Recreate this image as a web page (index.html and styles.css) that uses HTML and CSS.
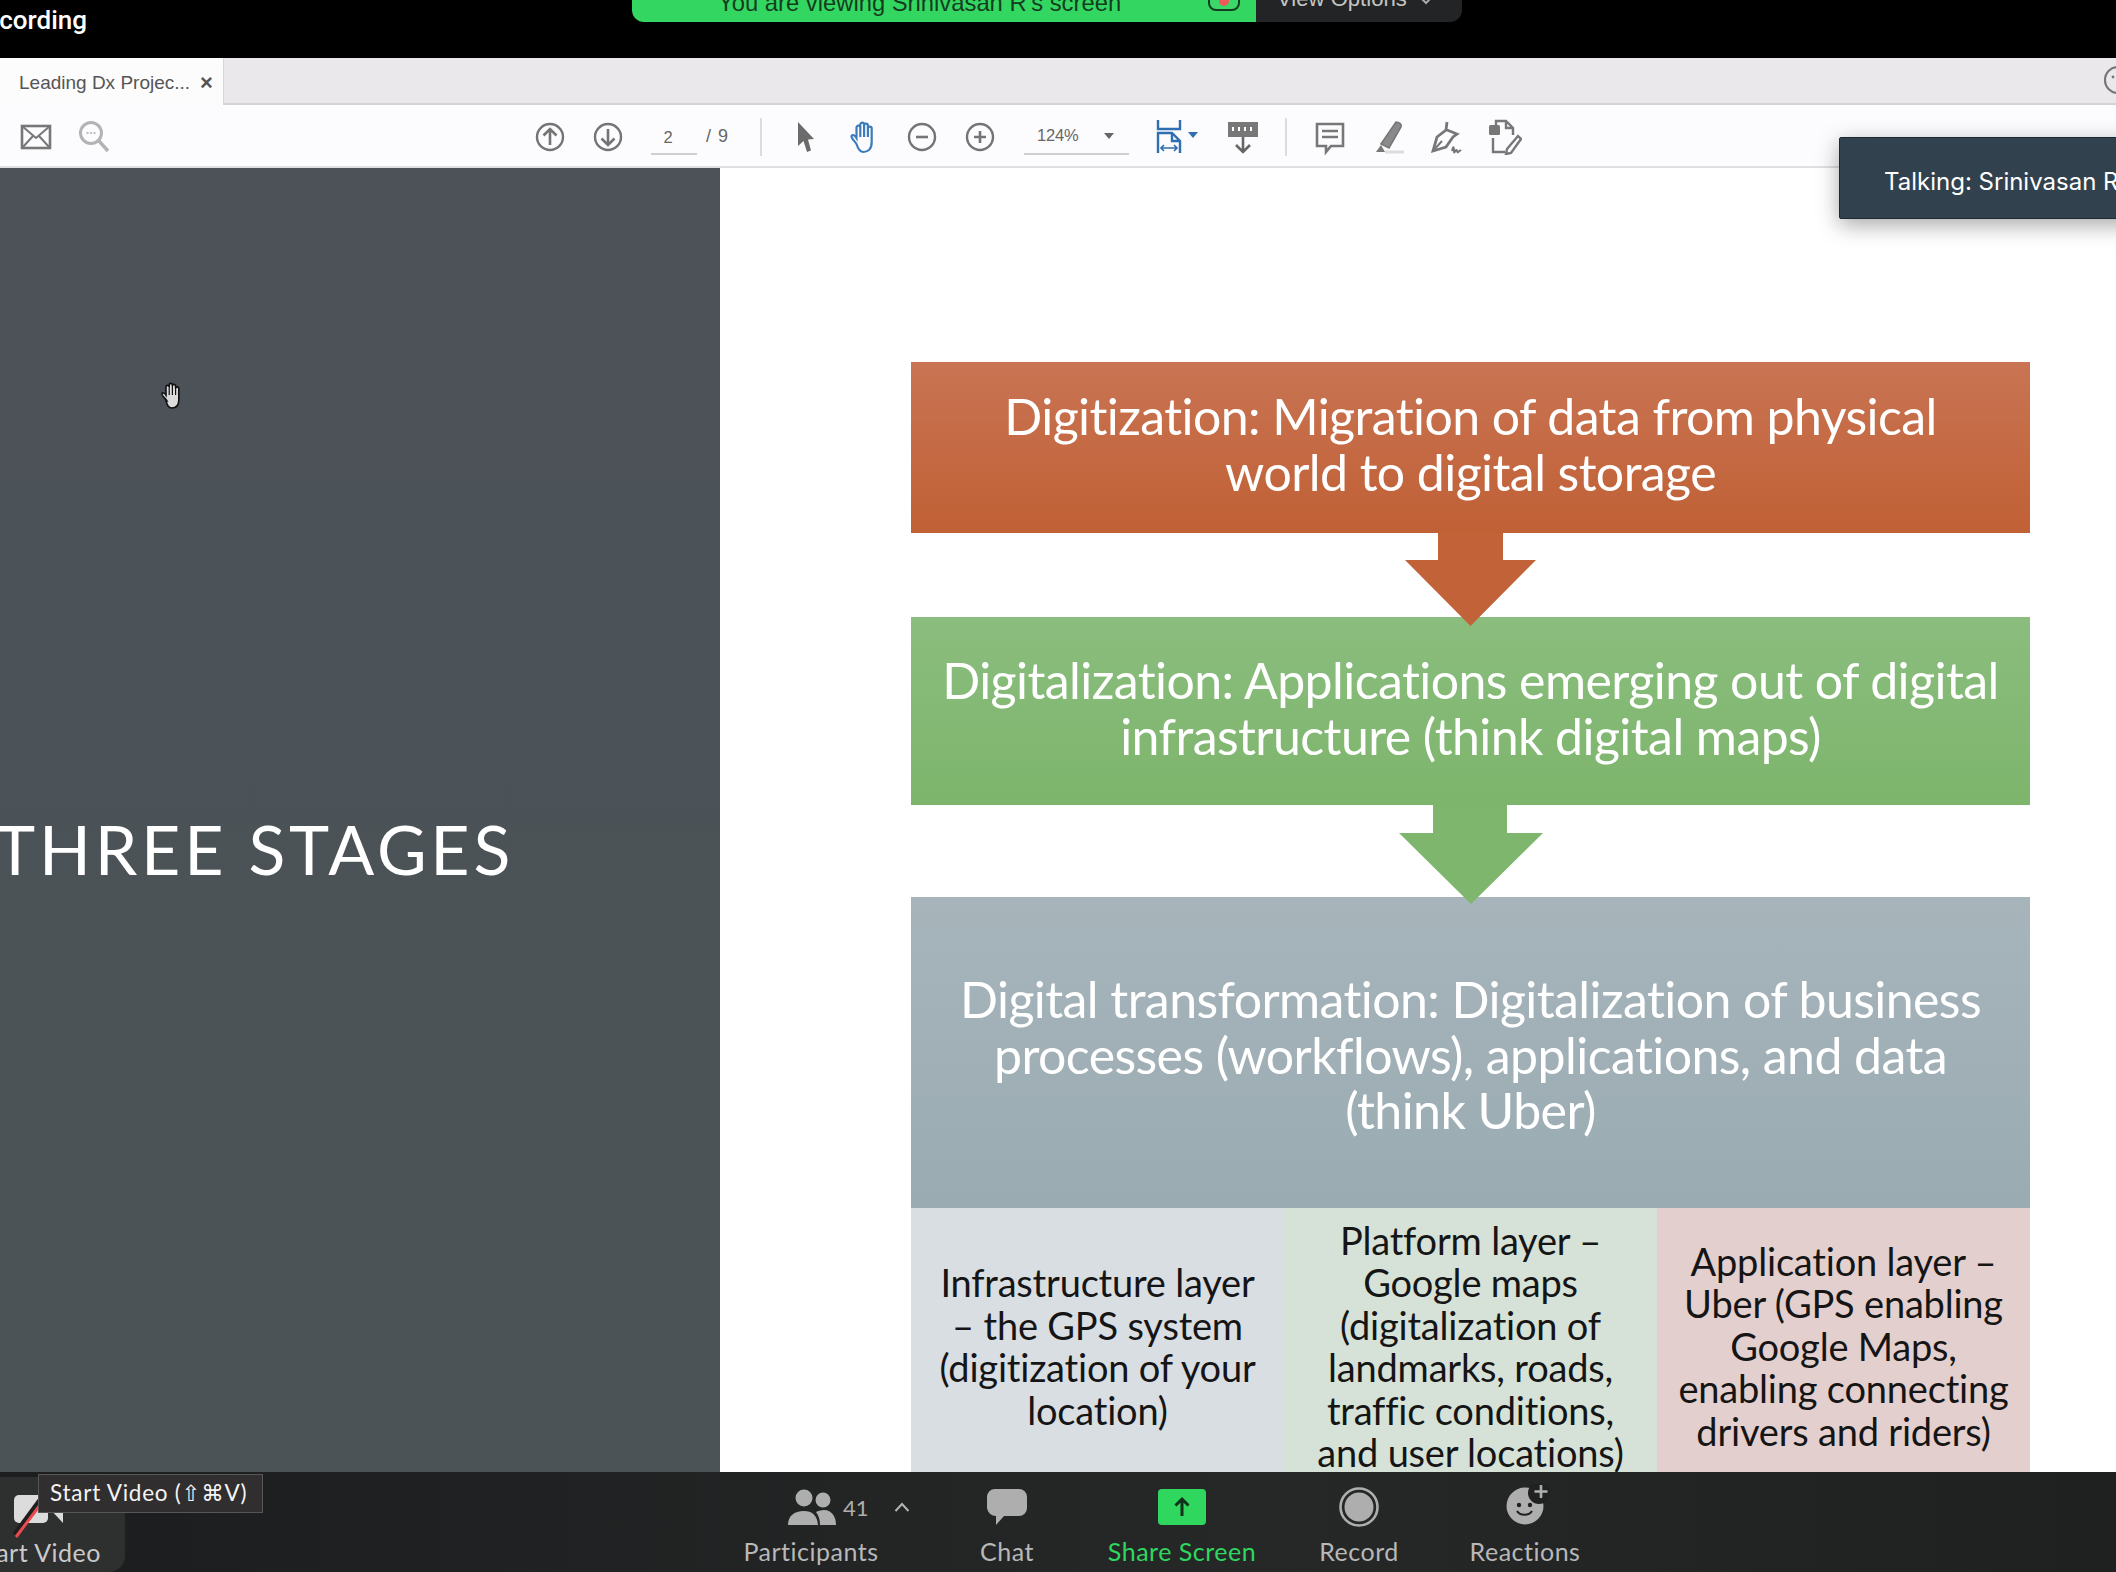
FILE: index.html
```html
<!DOCTYPE html>
<html lang="en">
<head>
<meta charset="utf-8">
<title>Screen share</title>
<link rel="stylesheet" href="styles.css">
</head>
<body>
<div class="app">
  <header class="topbar">
    <div class="rec"><span class="rec-text">Recording</span></div>
    <div class="banner">
      <div class="banner-green">
        <span class="banner-text">You are viewing Srinivasan R's screen</span>
        <span class="led"><span class="led-dot"></span></span>
      </div>
      <div class="banner-dark">
        <span>View Options</span>
        <svg class="chev" viewBox="0 0 12 8"><path d="M2 2l4 4 4-4" fill="none" stroke="#aaa" stroke-width="2"/></svg>
      </div>
    </div>
  </header>

  <div class="tabrow">
    <div class="tab"><span class="tab-title">Leading Dx Projec...</span><span class="tab-x">×</span></div>
    <svg class="help" viewBox="0 0 32 32"><circle cx="16" cy="16" r="13" fill="none" stroke="#777" stroke-width="2.2"/><circle cx="11" cy="13" r="1.4" fill="#777"/></svg>
  </div>

  <div class="toolbar">
    <div class="tb-group g-left">
      <span class="tb"><svg viewBox="0 0 36 36"><rect x="4" y="7" width="28" height="22" fill="none" stroke="#777" stroke-width="2.6"/><path d="M4 7l14 12L32 7M4 29l11-12M32 29L21 17" fill="none" stroke="#777" stroke-width="2"/></svg></span>
      <span class="tb"><svg viewBox="0 0 36 36"><circle cx="15" cy="14" r="10.500" fill="none" stroke="#b3b3b3" stroke-width="3"/><path d="M23 22l9 10" stroke="#b3b3b3" stroke-width="3.400"/><path d="M10.500 14h2M14 14h2M17.500 14h2" stroke="#aaa" stroke-width="1.600"/></svg></span>
    </div>
    <div class="tb-group g-nav">
      <span class="tb"><svg viewBox="0 0 36 36"><circle cx="18" cy="18" r="13" fill="none" stroke="#747474" stroke-width="2.400"/><path d="M18 26V10M11.500 16.500L18 10l6.500 6.500" fill="none" stroke="#747474" stroke-width="2.600"/></svg></span>
      <span class="tb"><svg viewBox="0 0 36 36"><circle cx="18" cy="18" r="13" fill="none" stroke="#747474" stroke-width="2.400"/><path d="M18 10v16M11.500 19.500L18 26l6.500-6.500" fill="none" stroke="#747474" stroke-width="2.600"/></svg></span>
      <span class="page-field">2</span>
      <span class="page-total">/ 9</span>
    </div>
    <span class="sep s1"></span>
    <div class="tb-group g-tools">
      <span class="tb"><svg viewBox="0 0 36 36"><path d="M10 3l16 17-6 .5 3 11-4 1.500-3.500-11L10 27z" fill="#6b6b6b"/></svg></span>
      <span class="tb"><svg viewBox="0 0 36 36"><path d="M10.500 25C8.500 22 5 19 5.500 17c1-2 3.500-.5 5 2V8.500a1.900 1.900 0 0 1 3.800 0v-3a1.900 1.900 0 0 1 3.800 0v1a1.900 1.900 0 0 1 3.800 0v3a1.900 1.900 0 0 1 3.800 0V23c0 7-3.700 10-8.200 10-3.500 0-5.500-3-7-8zM14.300 8.500V18M18.100 5.500V18M21.900 6.500V18" fill="none" stroke="#3c7cba" stroke-width="2.200"/></svg></span>
      <span class="tb"><svg viewBox="0 0 36 36"><circle cx="18" cy="18" r="13" fill="none" stroke="#747474" stroke-width="2.400"/><path d="M12 18h12" stroke="#747474" stroke-width="2.600"/></svg></span>
      <span class="tb"><svg viewBox="0 0 36 36"><circle cx="18" cy="18" r="13" fill="none" stroke="#747474" stroke-width="2.400"/><path d="M12 18h12M18 12v12" stroke="#747474" stroke-width="2.600"/></svg></span>
    </div>
    <div class="zoom-field">
      <span class="zoom-val">124%</span>
      <span class="tri"></span>
    </div>
    <div class="tb-group g-fit">
      <span class="tb"><svg viewBox="0 0 36 36"><path d="M7 1v9h22V1" fill="none" stroke="#2f6eb0" stroke-width="2.400"/><path d="M7 34V14h14l8 8v12M21 14v8h8" fill="none" stroke="#2f6eb0" stroke-width="2.400"/><path d="M10 29h16M13 26l-3 3 3 3M23 26l3 3-3 3" fill="none" stroke="#2f6eb0" stroke-width="1.700"/></svg></span>
      <span class="tri tri-blue"></span>
    </div>
    <div class="tb-group g-ruler">
      <span class="tb"><svg viewBox="0 0 36 36"><rect x="3" y="3" width="30" height="15" fill="#777"/><path d="M8 8v4M14 8v4M20 8v4M26 8v4" stroke="#fff" stroke-width="2"/><path d="M18 18v15M11 26l7 7 7-7" fill="none" stroke="#666" stroke-width="2.600"/></svg></span>
    </div>
    <span class="sep s2"></span>
    <div class="tb-group g-anno">
      <span class="tb"><svg viewBox="0 0 36 36"><path d="M5 5h26v22H19l-5 6v-6H5z" fill="none" stroke="#777" stroke-width="2.600"/><path d="M10 12h16M10 18h16" stroke="#777" stroke-width="2.400"/></svg></span>
      <span class="tb"><svg viewBox="0 0 36 36"><path d="M26 3c3 0 6 2 5 5L19 29l-8-4z" fill="#8a8a8a" stroke="#777" stroke-width="1.600"/><path d="M11 26l-5 7h9z" fill="#777"/><path d="M15 33h19" stroke="#ddd" stroke-width="3"/></svg></span>
      <span class="tb"><svg viewBox="0 0 36 36"><path d="M19 3l-1 8-9 7-4 14 13-4 7-10 4-3-10-4" fill="none" stroke="#777" stroke-width="2.800"/><path d="M5 32l9-10" stroke="#777" stroke-width="2"/><path d="M24 32c1-5 2-5 2 0s2-4 3 0 2-2 4 0" fill="none" stroke="#777" stroke-width="2"/></svg></span>
      <span class="tb"><svg viewBox="0 0 36 36"><rect x="3" y="6" width="11" height="10" rx="1.500" fill="#777"/><path d="M10 6V2h10l7 7v7M20 2v7h7M7 19v14h12" fill="none" stroke="#777" stroke-width="2.400"/><path d="M32 17l3 3-10 14-5 1 1-5z" fill="none" stroke="#777" stroke-width="2.400"/></svg></span>
    </div>
  </div>

  <main class="stage">
    <section class="cover">
      <h1 class="cover-title">THREE STAGES</h1>
      <svg class="cursor" viewBox="0 0 24 28"><path d="M7 19C5 16 1 13 2 11.500c1-1.500 3 0 4 1.500V5a1.600 1.600 0 0 1 3.200 0V3a1.600 1.600 0 0 1 3.200 0v1a1.600 1.600 0 0 1 3.200 0v2.500a1.600 1.600 0 0 1 3.200 0V18c0 5-2.500 8-7 8-3.500 0-4.500-3-5.800-7z" fill="#dcdcdc" stroke="#111" stroke-width="1.600"/><path d="M9.200 5v8M12.400 3v10M15.600 4v9" stroke="#111" stroke-width="1.200"/></svg>
    </section>
    <section class="slide">
      <div class="box box-orange">
        <span class="ln">Digitization: Migration of data from physical</span>
        <span class="ln">world to digital storage</span>
      </div>
      <svg class="arrow arrow-a" viewBox="0 0 131 93"><polygon points="33,0 98,0 98,27 131,27 65.500,93 0,27 33,27" fill="#c26238"/></svg>
      <div class="box box-green">
        <span class="ln">Digitalization: Applications emerging out of digital</span>
        <span class="ln">infrastructure (think digital maps)</span>
      </div>
      <svg class="arrow arrow-b" viewBox="0 0 144 99"><polygon points="34,0 108,0 108,28 144,28 72,99 0,28 34,28" fill="#7db66c"/></svg>
      <div class="box box-grey">
        <span class="ln">Digital transformation: Digitalization of business</span>
        <span class="ln">processes (workflows), applications, and data</span>
        <span class="ln">(think Uber)</span>
      </div>
      <div class="layers">
        <div class="layer layer-blue">
          <span class="ln">Infrastructure layer</span>
          <span class="ln">– the GPS system</span>
          <span class="ln">(digitization of your</span>
          <span class="ln">location)</span>
        </div>
        <div class="layer layer-green">
          <span class="ln">Platform layer –</span>
          <span class="ln">Google maps</span>
          <span class="ln">(digitalization of</span>
          <span class="ln">landmarks, roads,</span>
          <span class="ln">traffic conditions,</span>
          <span class="ln">and user locations)</span>
        </div>
        <div class="layer layer-red">
          <span class="ln">Application layer –</span>
          <span class="ln">Uber (GPS enabling</span>
          <span class="ln">Google Maps,</span>
          <span class="ln">enabling connecting</span>
          <span class="ln">drivers and riders)</span>
        </div>
      </div>
    </section>
  </main>

  <aside class="toast">Talking: Srinivasan R</aside>

  <footer class="controls">
    <div class="video">
      <svg class="video-icon" viewBox="0 0 52 48"><rect x="1" y="2" width="34" height="28" rx="5" fill="#dcdcdc"/><path d="M37 16l13-10v24z" fill="#dcdcdc"/><path d="M2 42L30 4" stroke="#1e1e1e" stroke-width="6"/><path d="M3 44L30 8" stroke="#ec4a50" stroke-width="3"/></svg>
      <span class="ctl-label video-label">Start Video</span>
      <div class="tooltip">Start Video (⇧⌘V)</div>
    </div>
    <div class="ctl ctl-people">
      <div class="people-row">
        <svg class="ic-people" viewBox="0 0 48 36"><circle cx="16" cy="9" r="8.500" fill="#aeaeae"/><circle cx="35" cy="11" r="7.500" fill="#aeaeae"/><path d="M0 36c0-9 6-14 16-14 8 0 13 4 14 14z" fill="#aeaeae"/><path d="M32 36c0-5-1-9-4-13 2-1 5-2 8-2 8 0 12 7 12 15z" fill="#aeaeae"/></svg>
        <span class="count">41</span>
        <svg class="caret" viewBox="0 0 16 10"><path d="M1.500 9L8 2l6.500 7" fill="none" stroke="#b5b5b5" stroke-width="2"/></svg>
      </div>
      <span class="ctl-label">Participants</span>
    </div>
    <div class="ctl ctl-chat">
      <svg class="ic" viewBox="0 0 40 36"><path d="M8 0h24a8 8 0 0 1 8 8v11a8 8 0 0 1-8 8H17l-8 9v-9A9 9 0 0 1 0 19V8a8 8 0 0 1 8-8z" fill="#aeaeae"/></svg>
      <span class="ctl-label">Chat</span>
    </div>
    <div class="ctl ctl-share">
      <svg class="ic ic-share" viewBox="0 0 48 36"><rect width="48" height="36" rx="4" fill="#30d75f"/><path d="M24 27V10M17.500 16.500L24 10l6.500 6.500" fill="none" stroke="#10301c" stroke-width="3"/></svg>
      <span class="ctl-label label-green">Share Screen</span>
    </div>
    <div class="ctl ctl-record">
      <svg class="ic ic-rec" viewBox="0 0 40 40"><circle cx="20" cy="20" r="18.500" fill="none" stroke="#aeaeae" stroke-width="2.600"/><circle cx="20" cy="20" r="14.500" fill="#aeaeae"/></svg>
      <span class="ctl-label">Record</span>
    </div>
    <div class="ctl ctl-react">
      <svg class="ic ic-react" viewBox="0 0 44 42"><circle cx="19" cy="22" r="18.500" fill="#aeaeae"/><circle cx="33" cy="9" r="11" fill="#202222"/><circle cx="13" cy="21" r="2.200" fill="#202222"/><circle cx="24" cy="21" r="2.200" fill="#202222"/><path d="M11 27c3 5 12 5 15 0" fill="none" stroke="#202222" stroke-width="2.200"/><path d="M35 1v13M28.500 7.500h13" stroke="#aeaeae" stroke-width="2.600"/></svg>
      <span class="ctl-label">Reactions</span>
    </div>
  </footer>
</div>
</body>
</html>
```

FILE: styles.css
```css
* { box-sizing: border-box; }
html, body { margin: 0; padding: 0; background: #000; }
.app {
  width: 2116px;
  height: 1572px;
  display: flex;
  flex-direction: column;
  overflow: hidden;
  position: relative;
  font-family: "Lato", "Liberation Sans", sans-serif;
}

/* top bar */
.topbar { height: 58px; background: #000; display: flex; align-items: flex-start; flex: none; }
.rec { width: 632px; height: 58px; overflow: hidden; flex: none; }
.rec-text {
  display: block;
  margin-left: -31px;
  margin-top: 5px;
  font-family: "Roboto", sans-serif;
  font-weight: 500;
  font-size: 26px;
  line-height: 30px;
  color: #fff;
}
.banner { display: flex; height: 22px; overflow: hidden; }
.banner-green {
  width: 624px;
  background: #34d662;
  border-bottom-left-radius: 12px;
  display: flex;
  align-items: flex-end;
  position: relative;
}
.banner-text {
  margin-left: 86px;
  margin-bottom: 7px;
  font-family: "Liberation Sans", sans-serif;
  font-size: 23.800px;
  line-height: 24px;
  color: #143d20;
  white-space: nowrap;
}
.led {
  margin-left: 87px;
  margin-bottom: 11px;
  width: 32px;
  height: 22px;
  border: 2px solid #143d20;
  border-radius: 8px;
  flex: none;
  position: relative;
  overflow: hidden;
  background: #3ad868;
  align-self: flex-end;
}
.led-dot { position: absolute; left: 9px; top: 1px; width: 10px; height: 14px; border-radius: 5px; background: #ee5a5a; }
.banner-dark {
  width: 206px;
  background: #232425;
  border-bottom-right-radius: 12px;
  display: flex;
  align-items: flex-end;
  padding: 0 0 11px 21px;
  font-family: "Liberation Sans", sans-serif;
  font-size: 22.100px;
  line-height: 24px;
  color: #c4c4c4;
  gap: 13px;
}
.chev { width: 12px; height: 8px; margin-bottom: 6px; flex: none; }

/* tab row */
.tabrow {
  height: 47px;
  flex: none;
  background: #eae8ea;
  border-bottom: 2px solid #d4d2d5;
  display: flex;
  align-items: flex-start;
  justify-content: space-between;
}
.tab {
  width: 224px;
  height: 47px;
  background: #fcfcfd;
  border-right: 1px solid #d8d6d9;
  display: flex;
  align-items: center;
  padding: 2px 0 0 19px;
  color: #555;
  font-family: "Liberation Sans", sans-serif;
  font-size: 19px;
}
.tab-title { white-space: nowrap; }
.tab-x { margin-left: 10px; font-size: 22px; line-height: 22px; color: #555; font-weight: 700; }
.help { width: 32px; height: 32px; margin: 6px -18px 0 0; }

/* toolbar */
.toolbar {
  height: 63px;
  flex: none;
  background: #fcfcfe;
  border-bottom: 2px solid #dfdfdf;
  display: flex;
  align-items: center;
  padding-top: 2px;
  color: #666;
  font-family: "Liberation Sans", sans-serif;
}
.tb-group { display: flex; align-items: center; flex: none; }
.tb { width: 58px; height: 40px; display: flex; align-items: center; justify-content: center; flex: none; }
.tb svg { width: 36px; height: 36px; display: block; }
.g-left { margin-left: 7px; }
.g-nav { margin-left: 398px; }
.page-field {
  width: 46px;
  margin-left: 14px;
  height: 36px;
  line-height: 36px;
  text-align: center;
  font-size: 16.500px;
  border-bottom: 2px solid #cfcfcf;
  padding-right: 12px;
}
.page-total { margin-left: 9px; font-size: 18px; width: 25px; white-space: nowrap; word-spacing: 2px; }
.sep { width: 2px; height: 38px; background: #dcdcdc; flex: none; }
.s1 { margin-left: 29px; }
.g-tools { margin-left: 15px; }
.zoom-field {
  width: 105px;
  height: 36px;
  margin-left: 15px;
  display: flex;
  align-items: center;
  border-bottom: 2px solid #cfcfcf;
  padding-left: 13px;
  flex: none;
  font-size: 16.500px;
}
.zoom-val { width: 67px; letter-spacing: -.2px; }
.tri { width: 0; height: 0; border-left: 5.500px solid transparent; border-right: 5.500px solid transparent; border-top: 6px solid #666; flex: none; }
.tri-blue { border-top-color: #2f6eb0; margin-left: -10px; margin-bottom: 4px; }
.g-fit { margin-left: 11px; }
.g-ruler { margin-left: 16px; }
.s2 { margin-left: 13px; }
.g-anno { margin-left: 14px; }

/* stage */
.stage { flex: 1; min-height: 0; display: flex; position: relative; overflow: hidden; background: #fff; }
.cover {
  width: 720px;
  flex: none;
  background: linear-gradient(#4c5258, #4b5356);
  display: flex;
  align-items: flex-start;
  position: relative;
  overflow: hidden;
}
.cover-title {
  margin: 641px 0 0 -5px;
  font-family: "Lato", sans-serif;
  font-weight: 400;
  font-size: 68px;
  line-height: 80px;
  letter-spacing: 3.800px;
  color: #fff;
  white-space: nowrap;
}
.cursor { position: absolute; left: 160px; top: 214px; width: 24px; height: 28px; }

.slide {
  width: 1119px;
  margin-left: 191px;
  padding-top: 194px;
  flex: none;
  display: flex;
  flex-direction: column;
  height: 1330px;
}
.ln { display: block; white-space: nowrap; }
.box {
  flex: none;
  display: flex;
  flex-direction: column;
  align-items: center;
  justify-content: center;
  color: #fff;
  font-size: 50px;
  line-height: 55.500px;
  letter-spacing: -.58px;
}
.box-orange { height: 171px; background: linear-gradient(#c97453, #c06035); padding-bottom: 6px; }
.box-green { height: 188px; margin-top: 84px; background: linear-gradient(#8bbd7e, #7db56c); padding-bottom: 5px; }
.box-grey { height: 311px; margin-top: 92px; background: linear-gradient(#a7b5bb, #9aabb2); padding-top: 6px; }
.arrow { display: block; flex: none; align-self: center; position: relative; z-index: 1; }
.arrow-a { width: 131px; height: 93px; margin-bottom: -93px; }
.arrow-b { width: 144px; height: 99px; margin-bottom: -99px; }
.layers { display: flex; height: 278px; flex: none; color: #151515; font-size: 38px; line-height: 42.500px; letter-spacing: -.2px; }
.layer { display: flex; flex-direction: column; align-items: center; justify-content: center; flex: none; padding-bottom: 2px; }
.layer-blue { width: 373px; background: #d9dee3; }
.layer-green { width: 373px; background: #d6e2d7; }
.layer-red { width: 373px; background: #e3cfcd; }

.toast {
  position: absolute;
  left: 1839px;
  top: 137px;
  width: 300px;
  height: 82px;
  background: #31414d;
  border: 1px solid #1d2931;
  border-radius: 2px;
  box-shadow: 0 6px 22px rgba(0,0,0,.35);
  color: #fff;
  font-family: "Inter", sans-serif;
  font-size: 24px;
  line-height: 88px;
  padding-left: 44px;
  white-space: nowrap;
  overflow: hidden;
}

/* bottom controls */
.controls {
  height: 100px;
  flex: none;
  background: linear-gradient(90deg, #1c1d1e, #262828 60%, #1f2020);
  display: flex;
  align-items: stretch;
  position: relative;
}
.ctl-label { display: block; font-size: 25px; line-height: 30px; color: #b8b8b8; white-space: nowrap; letter-spacing: .5px; }
.label-green { color: #30d75f; }
.video {
  width: 125px;
  margin-top: 5px;
  background: #2e2f2f;
  border-bottom-right-radius: 16px;
  flex: none;
  position: relative;
  overflow: visible;
  margin-right: 586px;
}
.video-icon { position: absolute; left: 13px; top: 16px; width: 52px; height: 48px; }
.video-label { position: absolute; right: 24px; top: 60px; color: #c9c9c9; overflow: hidden; width: 101px; direction: rtl; }
.tooltip {
  position: absolute;
  left: 38px;
  top: -3px;
  width: 225px;
  height: 39px;
  background: #302e2e;
  border: 1px solid #575757;
  color: #f4f4f4;
  font-family: "Lato", "DejaVu Sans", sans-serif;
  font-size: 22.500px;
  letter-spacing: .75px;
  line-height: 36px;
  padding-left: 11px;
  white-space: nowrap;
}
.ctl { display: flex; flex-direction: column; align-items: center; padding-top: 17px; flex: none; }
.ic { display: block; height: 36px; margin-bottom: 11px; }
.ctl-people { width: 200px; }
.ctl-chat { width: 192px; }
.ctl-share { width: 158px; }
.ctl-record { width: 196px; }
.ctl-react { width: 136px; }
.ic-rec { height: 40px; margin-top: -2px; margin-bottom: 9px; }
.ic-react { height: 42px; margin-top: -5px; margin-bottom: 10px; margin-left: 5px; }
.people-row { display: flex; align-self: flex-start; align-items: center; padding-left: 77px; height: 36px; margin-bottom: 11px; }
.ic-people { width: 48px; height: 36px; flex: none; }
.count { margin-left: 7px; font-size: 22px; color: #aeaeae; }
.caret { width: 16px; height: 10px; margin-left: 25px; flex: none; }
```
